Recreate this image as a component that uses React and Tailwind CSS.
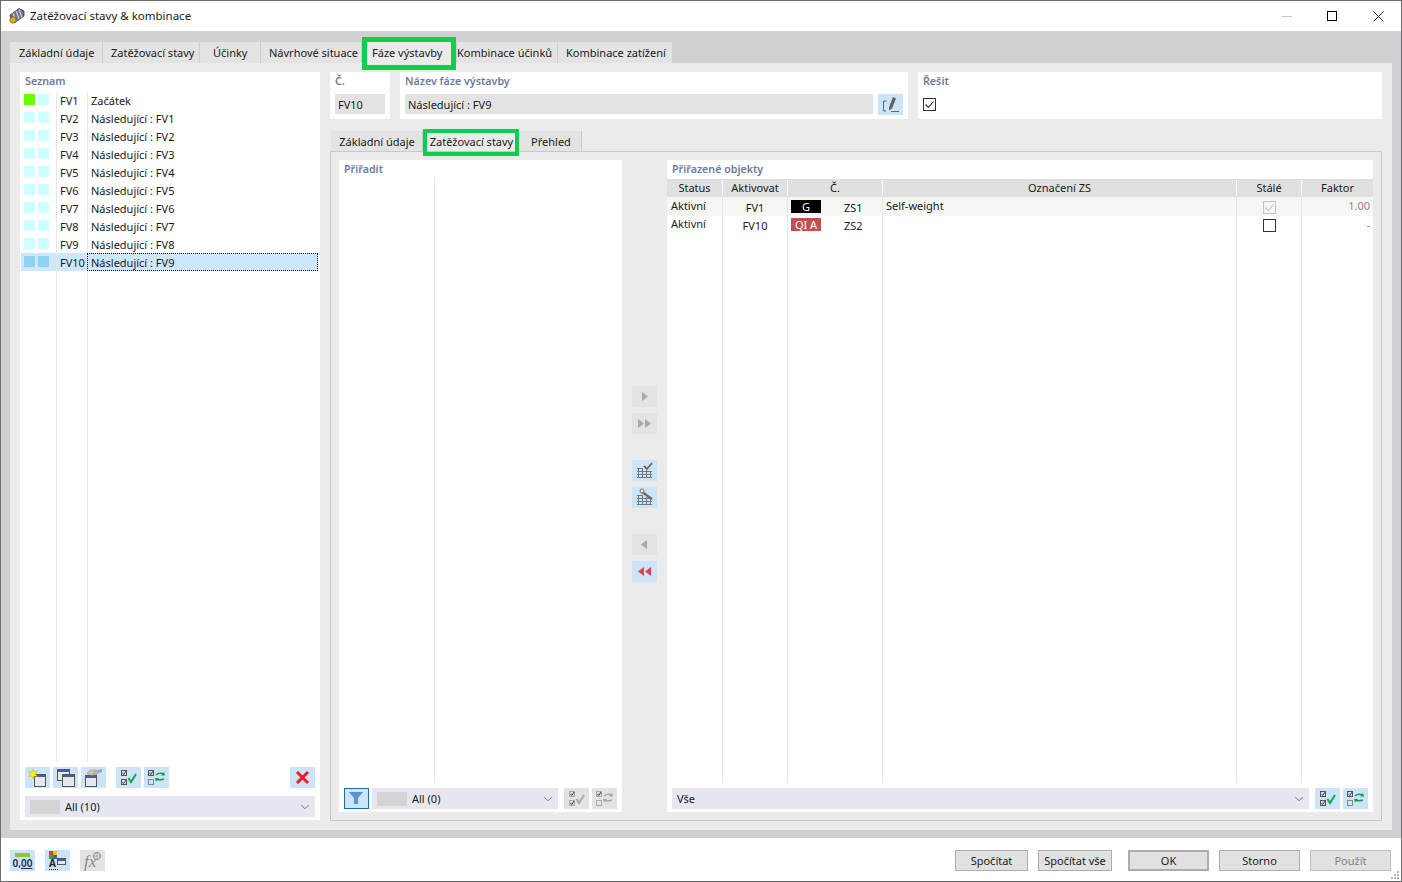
import { ChevronDown } from "lucide-react";

const FONT = "font-['Noto_Sans','Open_Sans',sans-serif]";

const topTabs = [
  ["Základní údaje", "w-[93px] pl-[9px]"],
  ["Zatěžovací stavy", "w-[97px] pl-[8px]"],
  ["Účinky", "w-[61px] pl-[13px]"],
  ["Návrhové situace", "w-[101px] pl-[8px]"],
  ["Fáze výstavby", "w-[95px] pl-[10px]"],
  ["Kombinace účinků", "w-[101px] pl-0"],
  ["Kombinace zatížení", "w-[115px] pl-[8px]"],
];

const rows = [
  ["FV1", "Začátek"],
  ["FV2", "Následující : FV1"],
  ["FV3", "Následující : FV2"],
  ["FV4", "Následující : FV3"],
  ["FV5", "Následující : FV4"],
  ["FV6", "Následující : FV5"],
  ["FV7", "Následující : FV6"],
  ["FV8", "Následující : FV7"],
  ["FV9", "Následující : FV8"],
  ["FV10", "Následující : FV9"],
];

function Svg({ children }) {
  return (
    <svg width="25" height="21" viewBox="0 0 25 21" fill="none">
      {children}
    </svg>
  );
}

function Win({ x, y, w = 11, h = 12 }) {
  return (
    <>
      <rect x={x + 0.5} y={y + 0.5} width={w} height={h} fill="#e8e8e8" stroke="#555" />
      <rect x={x + 1} y={y + 1} width={w - 1} height="2" fill="#3f5fa8" />
    </>
  );
}

function NewWinIcon() {
  return (
    <Svg>
      <Win x={9} y={7} />
      <path d="M8 2l1.3 3 3-.6-1.8 2.6 1.8 2.6-3-.6L8 12l-1.3-2.9-3 .6 1.8-2.6-1.8-2.6 3 .6z" fill="#f5ee20" stroke="#b8a800" strokeWidth="0.4" />
    </Svg>
  );
}

function CopyWinIcon() {
  return (
    <Svg>
      <Win x={4} y={2} w={12} h={11} />
      <Win x={9} y={7} w={12} h={12} />
    </Svg>
  );
}

function HandWinIcon() {
  return (
    <Svg>
      <Win x={4} y={8} w={11} h={11} />
      <path d="M6 7c1-3 4-4 7-4 2-.5 4 0 5 2-1 2-3 3-5 3-3 .5-5 0-7-1z" fill="#d8c0ac" stroke="#9a8674" strokeWidth="0.5" />
      <path d="M13 4.500h4M12 6.500h4" stroke="#9a8674" strokeWidth="0.5" />
      <path d="M17 3l4-1v3l-3 1z" fill="#7fa4e0" />
    </Svg>
  );
}

function Box({ x, y, on, color = "#555", fill = "#d8d8d8" }) {
  return (
    <>
      <rect x={x + 0.5} y={y + 0.5} width="5" height="5" fill={on ? fill : "none"} stroke={color} />
      {on && <path d={`M${x + 1.5} ${y + 3}l1.2 1.5 2.5-3.5`} stroke="#333" strokeWidth="0.9" />}
    </>
  );
}

function CheckAllIcon({ off }) {
  return (
    <Svg>
      <Box x={5} y={3} on color={off ? "#aaa" : "#555"} />
      <Box x={5} y={12} on color={off ? "#aaa" : "#555"} />
      <path d="M12.500 11l2.500 4 5-8" stroke={off ? "#a8a8a8" : "#14a84a"} strokeWidth="2" />
    </Svg>
  );
}

function ToggleIcon({ off }) {
  return (
    <Svg>
      <Box x={4} y={3} on color={off ? "#aaa" : "#555"} />
      <Box x={4} y={12} color={off ? "#aaa" : "#888"} />
      <path d="M12 8c2-2 5-2 8-1" stroke={off ? "#a8a8a8" : "#1b9a4a"} strokeWidth="1.4" />
      <path d="M20 12c-3 1-6 1-8 0" stroke={off ? "#a8a8a8" : "#1b9a4a"} strokeWidth="1.4" />
      <path d="M20 5l1 3.500-4 0z" fill={off ? "#a8a8a8" : "#1b9a4a"} />
      <path d="M12 14.500l-1-3.500 4 0z" fill={off ? "#a8a8a8" : "#1b9a4a"} />
    </Svg>
  );
}

function RedXIcon() {
  return (
    <Svg>
      <path d="M7 5l11 11M18 5L7 16" stroke="#ee1c25" strokeWidth="3" />
    </Svg>
  );
}

function GridBase() {
  return <path d="M6.500 9v9M10.500 8v10M14.500 10v8M18.500 12v6M5 11.500h15M5 14.500h15M5 17.500h15M5 8.500h6" stroke="#777" />;
}

function GridCheckIcon() {
  return (
    <Svg>
      <GridBase />
      <path d="M12 6l3 3 5-6" stroke="#666" strokeWidth="1.800" />
    </Svg>
  );
}

function GridWrenchIcon() {
  return (
    <Svg>
      <GridBase />
      <path d="M10 5l10 7" stroke="#6a6a6a" strokeWidth="2.200" />
      <circle cx="10" cy="4" r="2" fill="#fff" stroke="#6a6a6a" />
    </Svg>
  );
}

function ArrowIcon({ points, color = "#a8a8a8" }) {
  return (
    <Svg>
      {points.map((d) => (
        <path key={d} d={d} fill={color} />
      ))}
    </Svg>
  );
}

function FunnelIcon() {
  return (
    <svg width="23" height="19" viewBox="0 0 23 19" fill="none">
      <path d="M4 3h14l-5 6v6h-4V9z" fill="#5b94cc" />
    </svg>
  );
}

function PencilIcon() {
  return (
    <Svg>
      <path d="M8.500 7H5.500v10H8M13 17.500h8" stroke="#666" />
      <path d="M15 3l3 1.500-4 10-3 2 .2-3.500z" fill="#5f5f5f" />
    </Svg>
  );
}

function ValueIcon() {
  return (
    <div className="flex flex-col items-center leading-none">
      <div className="w-[15px] h-[4px] bg-[#8cc63f] mb-[1px]" />
      <span className="text-[10px] font-semibold leading-[10px] text-[#1d2a55]">
        0,<span className="underline">00</span>
      </span>
    </div>
  );
}

function ColorTextIcon() {
  return (
    <Svg>
      <rect x="4" y="1" width="4" height="4" fill="#e23b2e" />
      <rect x="8" y="1" width="4" height="4" fill="#f2c500" />
      <rect x="4" y="5" width="4" height="4" fill="#2aa84a" />
      <rect x="8" y="5" width="4" height="4" fill="#3f5fa8" />
      <text x="4" y="17" fontSize="10" fontWeight="700" fill="#222">A</text>
      <path d="M4 19.500h9" stroke="#222" strokeDasharray="1 1" />
      <rect x="12.500" y="8.500" width="8" height="6" fill="#e8e8e8" stroke="#555" />
      <rect x="13" y="9" width="7" height="2" fill="#3f5fa8" />
    </Svg>
  );
}

function FxIcon() {
  return (
    <Svg>
      <text x="4" y="17" fontSize="17" fontStyle="italic" fontFamily="Liberation Serif" fill="#8a8a8a">fx</text>
      <circle cx="17" cy="6" r="3.500" stroke="#8a8a8a" />
      <path d="M17 2.500v7M13.500 6h7" stroke="#8a8a8a" strokeWidth="0.6" />
    </Svg>
  );
}

function IconBtn({ children, off, className = "" }) {
  return (
    <div className={`w-[25px] h-[21px] shrink-0 flex items-center justify-center ${off ? "bg-[#e3e3e3]" : "bg-[#cce4f7]"} ${className}`}>
      {children}
    </div>
  );
}

function Heading({ children, className = "" }) {
  return <div className={`text-[10.7px] font-semibold leading-[18px] text-[#6c7aa0] ${className}`}>{children}</div>;
}

function SelectBox({ label, swatch, className = "" }) {
  return (
    <div className={`h-[21px] bg-[#e6e6f0] flex items-center pl-[5px] pr-[3px] ${className}`}>
      {swatch && <div className="w-[30px] h-[14px] bg-[#d4d4d4] mr-[5px]" />}
      <span className="flex-1 pt-[2px]">{label}</span>
      <ChevronDown size={14} strokeWidth={1.2} className="text-[#444]" />
    </div>
  );
}

function ActionBtn({ children, className = "" }) {
  return (
    <div className={`h-[21px] pt-[2px] flex items-center justify-center bg-[#e1e1e1] border border-[#adadad] ${className}`}>
      {children}
    </div>
  );
}

const tableCols = ["w-[56px]", "w-[65px]", "w-[95px]", "w-[354px]", "w-[65px]", "w-[71px]"];

function TableRow({ cells, className = "" }) {
  return (
    <div className={`flex ${className}`}>
      {tableCols.map((w, i) => (
        <div key={w + i} className={`${w} shrink-0 ${i < 5 ? "border-r border-[#e6e6e6]" : ""}`}>
          {cells && cells[i]}
        </div>
      ))}
    </div>
  );
}

function HeaderCell({ widthClass, children }) {
  return <div className={`${widthClass} shrink-0 text-center border-r border-white last:border-r-0`}>{children}</div>;
}

function Tag({ className, children }) {
  return <div className={`w-[30px] h-[13px] flex items-center justify-center leading-none ${className}`}>{children}</div>;
}

export default function App() {
  return (
    <div className={`${FONT} w-[1402px] h-[882px] overflow-hidden flex flex-col bg-white border border-[#6e6e6e] text-[11px] text-[#1a1a1a] antialiased`}>
      {/* Title bar */}
      <div className="h-[30px] shrink-0 flex items-center pl-[7px]">
        <svg width="18" height="18" viewBox="0 0 18 18" fill="none">
          <path d="M2 8l9-6.500 5 2.500v5l-9 6.500-4-2z" fill="#6c7686" stroke="#2e3440" strokeWidth="0.8" />
          <path d="M5 6l3 8M8 4l3 8M11 2.500l3 8" stroke="#d6dbe2" strokeWidth="1.100" />
          <circle cx="5" cy="13" r="3.200" fill="#d9a92c" stroke="#6a5210" strokeWidth="0.7" />
        </svg>
        <span className="ml-[4px] text-[11.5px]">Zatěžovací stavy &amp; kombinace</span>
        <div className="ml-auto flex items-center">
          <div className="w-[10px] h-px bg-[#c4c4c4] mr-[35px]" />
          <div className="w-[10px] h-[10px] border border-black mr-[36px]" />
          <svg width="11" height="11" viewBox="0 0 11 11" className="mr-[17px]">
            <path d="M0.500 0.500l10 10M10.500 0.500l-10 10" stroke="#111" strokeWidth="0.9" />
          </svg>
        </div>
      </div>

      {/* Main band */}
      <div className="h-[807px] shrink-0 bg-[#d0d0d4] pt-[11px] px-[9px]">
        <div className="flex h-[21px]">
          {topTabs.map(([t, w], i) => (
            <div
              key={t}
              className={`${w} relative pt-[2px] flex items-center whitespace-nowrap border-r border-[#d0d0d4] ${i === 4 ? "bg-[#ebebeb]" : "bg-[#e3e3e3]"}`}
            >
              {t}
              {i === 4 && <div className="absolute left-0 right-0 top-[-5px] bottom-[-7px] border-[5px] border-[#0ccf4e]" />}
            </div>
          ))}
        </div>

        <div className="h-[767px] w-[1382px] bg-[#ebebeb] pt-[9px] pl-[10px] flex gap-[10px]">
          {/* Seznam panel */}
          <div className="w-[300px] h-[748px] bg-white flex flex-col">
            <Heading className="pl-[5px]">Seznam</Heading>
            <div className="flex-1 flex flex-col pl-px pr-[2px] pt-[2px]">
              {rows.map(([id, name], i) => {
                const sel = i === 9;
                return (
                  <div key={id} className={`h-[18px] flex ${sel ? "bg-[#cce8ff] -mt-px" : ""}`}>
                    <div className={`w-[35px] flex gap-[3px] pl-[3px] ${sel ? "pt-[3px]" : "pt-[2px]"}`}>
                      <div className={`w-[11px] h-[11px] ${i === 0 ? "bg-[#66ff00]" : sel ? "bg-[#8fd3f4]" : "bg-[#ccffff]"}`} />
                      <div className={`w-[11px] h-[11px] ${sel ? "bg-[#8fd3f4]" : "bg-[#ccffff]"}`} />
                    </div>
                    <div className={`w-[31px] h-full flex items-center pl-[3px] border-l border-[#e6e6e6] ${sel ? "pt-[2px]" : ""}`}>{id}</div>
                    <div className={`flex-1 h-full flex items-center pl-[3px] ${sel ? "border border-dotted border-black pt-[2px]" : "border-l border-[#e6e6e6]"}`}>
                      {name}
                    </div>
                  </div>
                );
              })}
              <div className="flex-1 flex pl-[35px]">
                <div className="w-[31px] border-l border-[#e6e6e6]" />
                <div className="border-l border-[#e6e6e6]" />
              </div>
            </div>
            <div className="flex px-[5px] mt-[5px]">
              <div className="flex gap-[3px]">
                <IconBtn><NewWinIcon /></IconBtn>
                <IconBtn><CopyWinIcon /></IconBtn>
                <IconBtn><HandWinIcon /></IconBtn>
              </div>
              <div className="flex gap-[3px] ml-[10px]">
                <IconBtn><CheckAllIcon /></IconBtn>
                <IconBtn><ToggleIcon /></IconBtn>
              </div>
              <IconBtn className="ml-auto"><RedXIcon /></IconBtn>
            </div>
            <SelectBox swatch label="All (10)" className="mx-[5px] mt-[8px] mb-[3px]" />
          </div>

          {/* Right side */}
          <div className="w-[1052px] flex flex-col">
            <div className="flex gap-[10px] h-[47px]">
              <div className="w-[60px] bg-white px-[5px]">
                <Heading>Č.</Heading>
                <div className="h-[20px] mt-[4px] pt-[2px] bg-[#e3e3e3] flex items-center pl-[3px]">FV10</div>
              </div>
              <div className="w-[508px] bg-white pl-[5px]">
                <Heading>Název fáze výstavby</Heading>
                <div className="flex gap-[5px] mt-[4px]">
                  <div className="w-[468px] h-[20px] pt-[2px] bg-[#e3e3e3] flex items-center pl-[3px]">Následující : FV9</div>
                  <IconBtn><PencilIcon /></IconBtn>
                </div>
              </div>
              <div className="w-[464px] bg-white pl-[5px]">
                <Heading>Řešit</Heading>
                <div className="w-[13px] h-[13px] mt-[8px] border border-[#333] flex items-center justify-center">
                  <svg width="11" height="11" viewBox="0 0 11 11" fill="none">
                    <path d="M1.500 5.500l3 3 5-6" stroke="#333" strokeWidth="1.100" />
                  </svg>
                </div>
              </div>
            </div>

            {/* Sub tabs */}
            <div className="flex h-[20px] mt-[12px] pl-px">
              <div className="w-[92px] pt-[2px] pl-px flex items-center justify-center bg-[#e3e3e3] border-r border-[#c8c8d0]">Základní údaje</div>
              <div className="w-[96px] pt-[2px] pl-px relative flex items-center justify-center bg-[#ebebeb]">
                Zatěžovací stavy
                <div className="absolute left-0 right-0 top-[-2px] bottom-[-5px] border-[4px] border-[#0ccf4e]" />
              </div>
              <div className="w-[62px] ml-px pt-[2px] pl-px flex items-center justify-center bg-[#e3e3e3] border-r border-[#c8c8d0]">Přehled</div>
            </div>

            <div className="h-[670px] border border-[#c8c8d0] pt-[8px] pl-[8px] flex gap-[10px]">
              {/* Přiřadit */}
              <div className="w-[283px] h-[652px] bg-white flex flex-col">
                <Heading className="pl-[5px]">Přiřadit</Heading>
                <div className="flex-1 ml-[95px] border-l border-[#e6e6e6]" />
                <div className="flex items-center pl-[5px] mt-[5px] mb-[3px]">
                  <div className="w-[25px] h-[21px] flex items-center justify-center bg-[#cce4f7] border border-[#1f6ca8]">
                    <FunnelIcon />
                  </div>
                  <SelectBox swatch label="All (0)" className="w-[186px] ml-[3px]" />
                  <IconBtn off className="ml-[6px]"><CheckAllIcon off /></IconBtn>
                  <IconBtn off className="ml-[3px]"><ToggleIcon off /></IconBtn>
                </div>
              </div>

              {/* Middle buttons */}
              <div className="w-[25px] flex flex-col pt-[226px]">
                <IconBtn off><ArrowIcon points={["M10 6l6 4.500-6 4.500z"]} /></IconBtn>
                <IconBtn off className="mt-[6px]"><ArrowIcon points={["M6 6l6 4.500-6 4.500z", "M13 6l6 4.500-6 4.500z"]} /></IconBtn>
                <IconBtn className="mt-[26px]"><GridCheckIcon /></IconBtn>
                <IconBtn className="mt-[6px]"><GridWrenchIcon /></IconBtn>
                <IconBtn off className="mt-[26px]"><ArrowIcon points={["M15 6l-6 4.500 6 4.500z"]} /></IconBtn>
                <IconBtn className="mt-[6px]"><ArrowIcon color="#e0404a" points={["M12 6l-6 4.500 6 4.500z", "M19 6l-6 4.500 6 4.500z"]} /></IconBtn>
              </div>

              {/* Přiřazené objekty */}
              <div className="w-[706px] h-[652px] bg-white flex flex-col">
                <Heading className="pl-[5px] h-[19px]">Přiřazené objekty</Heading>
                <div className="flex h-[18px] bg-[#e0e0e0] items-center">
                  <HeaderCell widthClass="w-[56px]">Status</HeaderCell>
                  <HeaderCell widthClass="w-[65px]">Aktivovat</HeaderCell>
                  <HeaderCell widthClass="w-[95px]">Č.</HeaderCell>
                  <HeaderCell widthClass="w-[354px]">Označení ZS</HeaderCell>
                  <HeaderCell widthClass="w-[65px]">Stálé</HeaderCell>
                  <HeaderCell widthClass="w-[71px]">Faktor</HeaderCell>
                </div>
                <TableRow
                  className="h-[19px] bg-[#f6f7f2]"
                  cells={[
                    <div className="pl-[4px] leading-[18px]">Aktivní</div>,
                    <div className="text-center leading-[21px]">FV1</div>,
                    <div className="flex h-full pl-[3px] pt-[3px]">
                      <Tag className="bg-black text-white">G</Tag>
                      <span className="ml-[23px] leading-[16px]">ZS1</span>
                    </div>,
                    <div className="pl-[3px] leading-[18px]">Self-weight</div>,
                    <div className="flex justify-center pt-[4px]">
                      <div className="w-[13px] h-[13px] border border-[#c4c4c4] flex items-center justify-center">
                        <svg width="11" height="11" viewBox="0 0 11 11" fill="none">
                          <path d="M1.500 5.500l3 3 5-6" stroke="#c4c4c4" strokeWidth="1.100" />
                        </svg>
                      </div>
                    </div>,
                    <div className="text-right pr-[3px] text-[#8a8a8a] leading-[18px]">1.00</div>,
                  ]}
                />
                <TableRow
                  className="h-[18px]"
                  cells={[
                    <div className="pl-[4px] leading-[16px]">Aktivní</div>,
                    <div className="text-center leading-[20px]">FV10</div>,
                    <div className="flex h-full pl-[3px] pt-[2px]">
                      <Tag className="bg-[#c05050] text-white">QI A</Tag>
                      <span className="ml-[23px] leading-[16px]">ZS2</span>
                    </div>,
                    null,
                    <div className="flex justify-center pt-[3px]">
                      <div className="w-[13px] h-[13px] border border-[#333]" />
                    </div>,
                    <div className="text-right pr-[3px] text-[#8a8a8a] leading-[18px]">-</div>,
                  ]}
                />
                <TableRow className="flex-1" />
                <div className="flex items-center pl-[5px] mt-[5px] mb-[3px]">
                  <SelectBox label="Vše" className="w-[637px]" />
                  <IconBtn className="ml-[6px]"><CheckAllIcon /></IconBtn>
                  <IconBtn className="ml-[3px]"><ToggleIcon /></IconBtn>
                </div>
              </div>
            </div>
          </div>
        </div>
      </div>

      {/* Footer */}
      <div className="flex-1 relative flex items-start pt-[12px] pl-[9px]">
        <div className="flex gap-[10px]">
          <IconBtn><ValueIcon /></IconBtn>
          <IconBtn><ColorTextIcon /></IconBtn>
          <IconBtn off><FxIcon /></IconBtn>
        </div>
        <div className="ml-auto flex mr-[10px]">
          <ActionBtn className="w-[73px]">Spočítat</ActionBtn>
          <ActionBtn className="w-[74px] ml-[10px]">Spočítat vše</ActionBtn>
          <ActionBtn className="w-[81px] ml-[16px] border-2 border-[#0078d7]">OK</ActionBtn>
          <ActionBtn className="w-[81px] ml-[10px]">Storno</ActionBtn>
          <ActionBtn className="w-[81px] ml-[10px] bg-[#cccccc] border-[#bfbfbf] text-[#808080]">Použít</ActionBtn>
        </div>
        <svg width="10" height="10" viewBox="0 0 10 10" className="absolute right-[1px] bottom-[1px]">
          <path d="M7 1h2v2H7zM4 4h2v2H4zM7 4h2v2H7zM1 7h2v2H1zM4 7h2v2H4zM7 7h2v2H7z" fill="#b8b8b8" />
        </svg>
      </div>
    </div>
  );
}
